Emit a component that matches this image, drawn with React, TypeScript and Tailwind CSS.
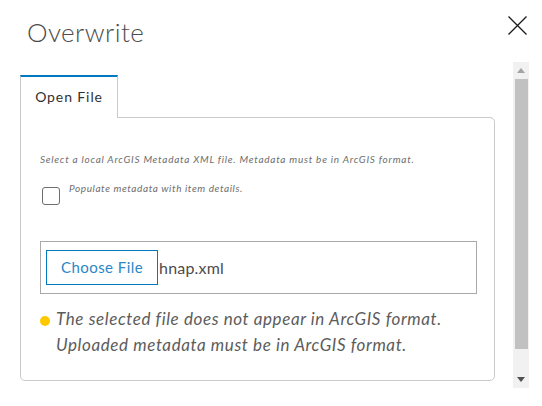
import React from "react";

const App = () => {
  return (
    <div className="relative w-[542px] h-[406px] overflow-hidden bg-white font-['Lato','Liberation_Sans',sans-serif]">
      {/* header */}
      <div className="flex items-start justify-between h-[62px]">
        <h1 className="ml-[27px] mt-[15px] text-[26px] leading-[34px] font-light tracking-[0.45px] text-[#4c4c4c]">Overwrite</h1>
        <button className="mr-[14px] mt-[15px] w-[21px] h-[21px] flex items-center justify-center" aria-label="Close">
          <svg width="21" height="21" viewBox="0 0 21 21" fill="none" stroke="#1a1a1a" strokeWidth="1.3">
            <path d="M1.5 1.5 L19.5 19.5 M19.5 1.5 L1.5 19.5" />
          </svg>
        </button>
      </div>

      <div className="flex">
        {/* content */}
        <div className="ml-[20px] w-[475px] pt-[13px]">
          <div className="flex">
            <div className="w-[98px] h-[43px] -mb-px relative z-10 bg-white border-t-2 border-t-[#0079c1] border-x border-x-[#cacaca] flex items-center justify-center text-[14px] tracking-[0.9px] text-[#323232]">
              <span className="-mt-[2px]">Open File</span>
            </div>
          </div>
          <div className="h-[264px] border border-[#cacaca] rounded-tr-[5px] rounded-b-[5px] pl-[19px] pr-[17px] pt-[34px]">
            <p className="text-[10px] leading-[14px] italic tracking-[0.75px] text-[#6e6e6e] whitespace-nowrap">
              Select a local ArcGIS Metadata XML file. Metadata must be in ArcGIS format.
            </p>
            <label className="mt-[20px] flex items-start gap-[9px]">
              <span className="ml-[2px] mt-[1px] w-[18px] h-[18px] rounded-[3px] border border-[#6e6e6e] bg-white" />
              <span className="-mt-[5px] text-[10px] leading-[14px] italic tracking-[0.6px] text-[#6e6e6e]">Populate metadata with item details.</span>
            </label>
            <div className="mt-[36px] h-[53px] border border-[#a9a9a9] flex items-center pl-[5px]">
              <span className="w-[112px] h-[35px] border border-[#0079c1] flex items-center justify-center text-[15px] tracking-[0.45px] text-[#2b87c6]">
                Choose File
              </span>
              <span className="ml-[1px] text-[16px] tracking-[0.2px] text-[#4c4c4c]">hnap.xml</span>
            </div>
            <div className="mt-[12px] flex items-start">
              <span className="mt-[10px] w-[10px] h-[10px] rounded-full bg-[#ffc900] shrink-0" />
              <p className="ml-[6px] text-[17px] leading-[26px] italic tracking-[0.6px] text-[#5c5c5c] whitespace-nowrap">
                The selected file does not appear in ArcGIS format.
                <br />
                Uploaded metadata must be in ArcGIS format.
              </p>
            </div>
          </div>
        </div>

        {/* scrollbar */}
        <div className="ml-[18px] w-[16px] h-[326px] bg-[#f1f1f1] flex flex-col items-center">
          <div className="h-[17px] flex items-center justify-center">
            <svg width="8" height="5" viewBox="0 0 8 5"><path d="M0 5 L4 0 L8 5 Z" fill="#a3a3a3" /></svg>
          </div>
          <div className="w-[13px] h-[270px] ml-[1px] bg-[#c1c1c1]" />
          <div className="flex-1" />
          <div className="h-[17px] flex items-center justify-center">
            <svg width="8" height="5" viewBox="0 0 8 5"><path d="M0 0 L8 0 L4 5 Z" fill="#505050" /></svg>
          </div>
        </div>
      </div>
    </div>
  );
};

export default App;
